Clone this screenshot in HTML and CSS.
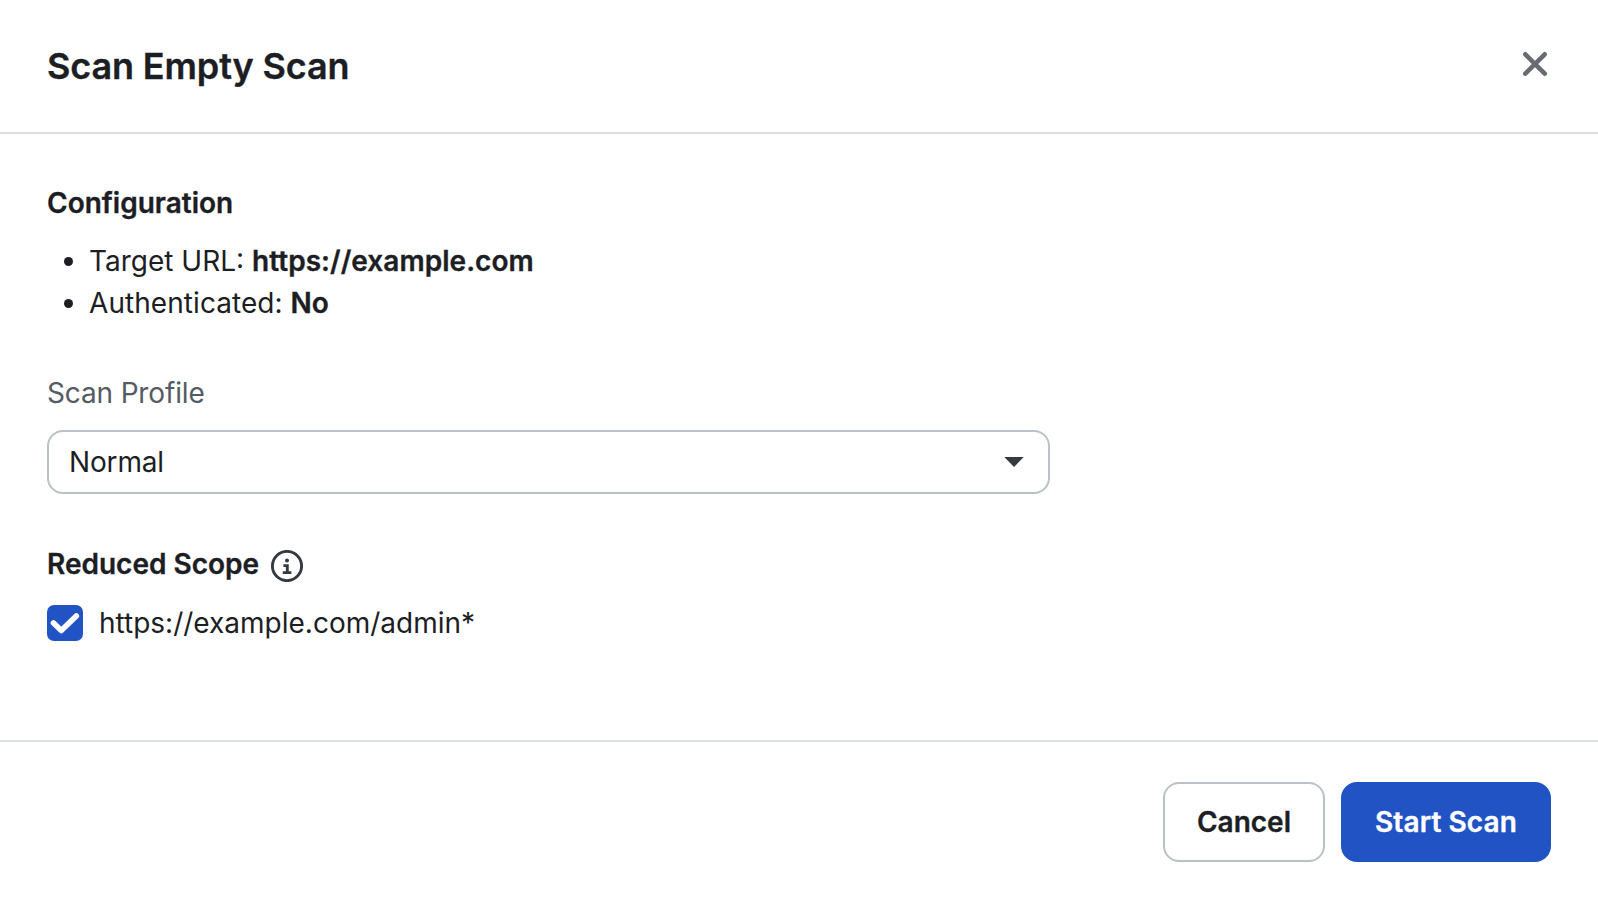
FILE: index.html
```html
<!DOCTYPE html>
<html lang="en">
<head>
<meta charset="utf-8">
<title>Scan Empty Scan</title>
<link rel="stylesheet" href="styles.css">
</head>
<body>
<div class="dialog">
  <header class="header">
    <h1 class="title">Scan Empty Scan</h1>
    <svg class="close" viewBox="0 0 28 28"><path d="M4.300 4.300 23.700 23.700M23.700 4.300 4.300 23.700"/></svg>
  </header>
  <main class="body">
    <h2 class="heading">Configuration</h2>
    <ul class="list">
      <li>Target URL: <b class="url">https://example.com</b></li>
      <li><span class="auth">Authenticated: </span><b>No</b></li>
    </ul>
    <div class="label">Scan Profile</div>
    <div class="select"><span>Normal</span><svg class="caret" viewBox="0 0 20 10"><path d="M0.300 0H19.700L10 10Z"/></svg></div>
    <div class="scope"><h2 class="heading">Reduced Scope</h2>
      <svg class="info" viewBox="0 0 32 32"><circle cx="16" cy="16" r="14.600"/><path d="M12.400 15.600H16.300V22.600M11.800 22.600H20.400"/><circle class="dot" cx="16" cy="10.500" r="2"/></svg>
    </div>
    <div class="option"><span class="checkbox"><svg viewBox="0 0 36 36"><path d="M6.500 18 14.300 25.500 29.300 11"/></svg></span><span>https://example.com/admin*</span></div>
  </main>
  <footer class="footer"><button class="button">Cancel</button><button class="button primary">Start Scan</button></footer>
</div>
</body>
</html>
```
FILE: styles.css
```css
* { box-sizing: border-box; }
body { margin: 0; background: #fff; color: #1c1e24; font: 28px/42px Inter, sans-serif; }
.dialog { width: 1598px; height: 902px; display: flex; flex-direction: column; }
.header { height: 134px; padding: 0 49px 2px 47px; border-bottom: 2px solid #dcdde1; display: flex; align-items: center; justify-content: space-between; }
.title, .heading, b, .button { -webkit-text-stroke: 0.35px currentColor; }
.title { margin: 2px 0 0; font-size: 36px; font-weight: 600; line-height: 48px; letter-spacing: -0.13px; }
.close { width: 28px; height: 28px; margin-top: -2px; fill: none; stroke: #676c73; stroke-width: 4.600; stroke-linecap: round; }
.body { height: 606px; padding: 48px 47px 0; }
.heading { margin: 0; font-size: 28px; font-weight: 600; line-height: 42px; }
.list { margin: 16px 0 0; padding-left: 42px; }
.auth { letter-spacing: 0.06px; }
.url { letter-spacing: 0.04px; }
b { font-weight: 600; }
.label { margin-top: 48px; color: #545b64; letter-spacing: -0.15px; }
.select { width: 1003px; height: 64px; margin-top: 16px; padding: 0 24px 0 20px; border: 2px solid #bbc1c8; border-radius: 16px; letter-spacing: -0.15px; display: flex; align-items: center; justify-content: space-between; }
.caret { width: 20px; height: 10px; fill: #343a40; }
.scope { margin-top: 49px; display: flex; align-items: center; gap: 12px; }
.info { width: 32px; height: 32px; margin-top: 3px; fill: none; stroke: #343a40; stroke-width: 2.900; }
.dot { fill: #343a40; stroke: none; }
.option { margin-top: 17px; display: flex; align-items: center; gap: 16px; }
.checkbox { width: 36px; height: 36px; border-radius: 7px; background: #2153c5; }
.checkbox svg { display: block; width: 36px; height: 36px; fill: none; stroke: #fff; stroke-width: 5.600; stroke-linecap: round; stroke-linejoin: round; }
.footer { flex: 1; border-top: 2px solid #dcdfe3; padding: 40px 47px; display: flex; align-items: flex-start; justify-content: flex-end; gap: 16px; }
.button { height: 80px; width: 162px; border: 2px solid #bbc1c8; border-radius: 16px; background: #fff; color: #1c1e24; font: 600 28px/42px Inter, sans-serif; padding: 0; }
.primary { width: 210px; background: #2153c5; border-color: #2153c5; color: #fff; letter-spacing: 0.1px; }
```
